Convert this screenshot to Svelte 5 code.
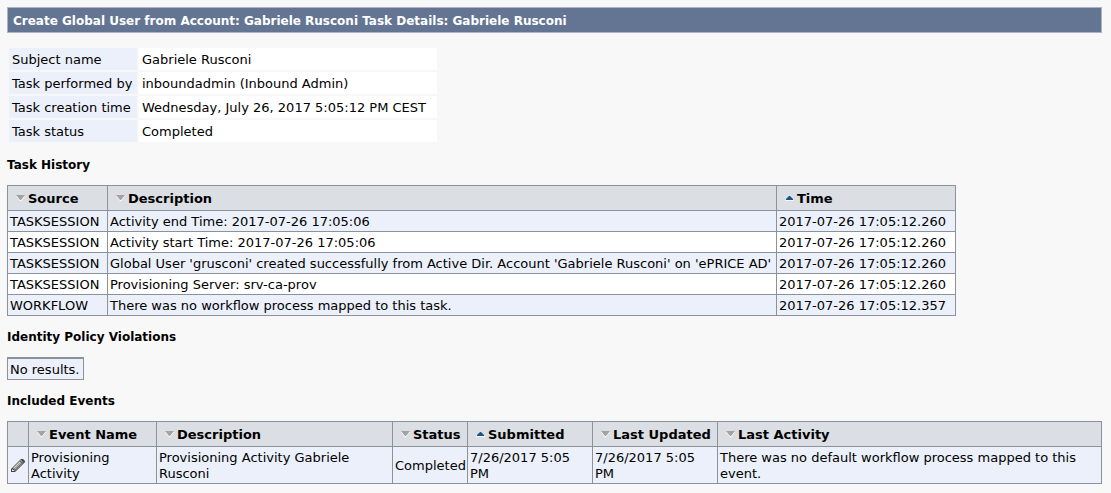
<script>
  const details = [
    ['Subject name', 'Gabriele Rusconi'],
    ['Task performed by', 'inboundadmin (Inbound Admin)'],
    ['Task creation time', 'Wednesday, July 26, 2017 5:05:12 PM CEST'],
    ['Task status', 'Completed']
  ];

  const history = [
    ['TASKSESSION', 'Activity end Time: 2017-07-26 17:05:06', '2017-07-26 17:05:12.260'],
    ['TASKSESSION', 'Activity start Time: 2017-07-26 17:05:06', '2017-07-26 17:05:12.260'],
    ['TASKSESSION', "Global User 'grusconi' created successfully from Active Dir. Account 'Gabriele Rusconi' on 'ePRICE AD'", '2017-07-26 17:05:12.260'],
    ['TASKSESSION', 'Provisioning Server: srv-ca-prov', '2017-07-26 17:05:12.260'],
    ['WORKFLOW', 'There was no workflow process mapped to this task.', '2017-07-26 17:05:12.357']
  ];

  const eventColumns = ['Event Name', 'Description', 'Status', 'Submitted', 'Last Updated', 'Last Activity'];
  const events = [
    [
      'Provisioning Activity',
      'Provisioning Activity Gabriele Rusconi',
      'Completed',
      '7/26/2017 5:05 PM',
      '7/26/2017 5:05 PM',
      'There was no default workflow process mapped to this event.'
    ]
  ];
</script>

{#snippet sortHead(label, active)}
  <th scope="col" aria-sort={active ? 'ascending' : undefined}>
    <button class="sort" type="button">
      <svg width="9" height="6" viewBox="0 0 9 6" aria-hidden="true">
        {#if active}
          <path d="M0 5H9V6H0Z" fill="#f4f7f9" />
          <path d="M1 5V4L4 1H5L8 4V5Z" fill="#1a5482" />
        {:else}
          <path d="M0 1 4 6H5L9 1Z" fill="#fff" />
          <path d="M0 0H9L5 5H4Z" fill="#a3a3a3" />
        {/if}
      </svg>
      <span>{label}</span>
    </button>
  </th>
{/snippet}

<main>
  <h1>Create Global User from Account: Gabriele Rusconi Task Details: Gabriele Rusconi</h1>

  <table class="details">
    <tbody>
      {#each details as [name, value]}
        <tr><th scope="row">{name}</th><td>{value}</td></tr>
      {/each}
    </tbody>
  </table>

  <h2>Task History</h2>
  <table class="grid history">
    <colgroup><col class="source" /><col class="message" /><col class="time" /></colgroup>
    <thead>
      <tr>
        {@render sortHead('Source', false)}
        {@render sortHead('Description', false)}
        {@render sortHead('Time', true)}
      </tr>
    </thead>
    <tbody>
      {#each history as row}
        <tr>{#each row as cell}<td>{cell}</td>{/each}</tr>
      {/each}
    </tbody>
  </table>

  <h2>Identity Policy Violations</h2>
  <p class="empty">No results.</p>

  <h2>Included Events</h2>
  <table class="grid events">
    <colgroup>
      <col class="edit" /><col class="name" /><col class="description" /><col class="status" />
      <col class="date" /><col class="date" /><col />
    </colgroup>
    <thead>
      <tr>
        <td></td>
        {#each eventColumns as column}{@render sortHead(column, column === 'Submitted')}{/each}
      </tr>
    </thead>
    <tbody>
      {#each events as row}
        <tr>
          <td>
            <button class="pencil" type="button" aria-label="Edit">
              <svg width="16" height="16" viewBox="0 0 16 16" aria-hidden="true">
                <path d="M1 14V11L11 1H13L15 3V4L5 14Z" fill="#444" />
                <path d="M3 10 11 2 12 3 4 11Z" fill="#d8d8d8" />
                <path d="M4 11 12 3 13 4 5 12Z" fill="#aaa" />
                <path d="M5 12 13 4 14 5 6 13Z" fill="#777" />
                <path d="M2 13V11L5 13Z" fill="#e4e4e4" />
                <path d="M10 3 13 6" stroke="#666" />
              </svg>
            </button>
          </td>
          {#each row as cell}<td>{cell}</td>{/each}
        </tr>
      {/each}
    </tbody>
  </table>
</main>

<style>
  :global(body) {
    margin: 0;
    background: #f8f8f8;
  }

  main {
    padding: 7px 9px 8px 7px;
    color: #000;
    font: 13px/16px Verdana, "DejaVu Sans", sans-serif;
  }

  h1,
  h2 {
    margin: 0;
    font-size: 12px;
    line-height: 16px;
  }

  h1 {
    margin-bottom: 13px;
    padding: 5px 5px 3px;
    border: 1px solid #aab2c6;
    background: #637593;
    color: #fff;
  }

  h2 {
    margin: 13px 0 12px;
  }

  .details {
    border-spacing: 2px;
  }

  .details th,
  .details td {
    padding: 4px 3px 2px;
    text-align: left;
    font-weight: normal;
  }

  .details th {
    min-width: 122px;
    background: #ebf0fa;
  }

  .details td {
    min-width: 292px;
    background: #fff;
  }

  .grid {
    border-collapse: collapse;
  }

  .grid :is(th, td) {
    padding: 3px 2px 1px;
    border: 1px solid #8a929b;
    text-align: left;
    vertical-align: middle;
  }

  .grid thead :is(th, td) {
    padding: 5px 8px 3px;
    background: #dbdee3;
  }

  .grid tbody tr {
    background: #fff;
  }

  .grid tbody tr:nth-child(odd) {
    background: #ebf0fa;
  }

  .sort {
    display: flex;
    align-items: center;
    gap: 3px;
    padding: 0;
    border: 0;
    background: none;
    color: inherit;
    font: bold 13px/16px Verdana, "DejaVu Sans", sans-serif;
    white-space: nowrap;
    cursor: pointer;
  }

  .sort svg {
    flex: none;
    margin-bottom: 3px;
  }

  .source {
    width: 100px;
  }

  .message {
    width: 669px;
  }

  .time {
    width: 179px;
  }

  .empty {
    width: fit-content;
    margin: 0;
    padding: 3px 3px 1px 2px;
    border: 1px solid #8a929b;
    border-top-width: 2px;
    background: #ebf0fa;
  }

  .events {
    width: 100%;
    table-layout: fixed;
  }

  .edit {
    width: 21px;
  }

  .name {
    width: 128px;
  }

  .description {
    width: 236px;
  }

  .status {
    width: 75px;
  }

  .date {
    width: 125px;
  }

  .pencil {
    display: block;
    padding: 0;
    border: 0;
    background: none;
    cursor: pointer;
  }

  .pencil svg {
    display: block;
  }
</style>
